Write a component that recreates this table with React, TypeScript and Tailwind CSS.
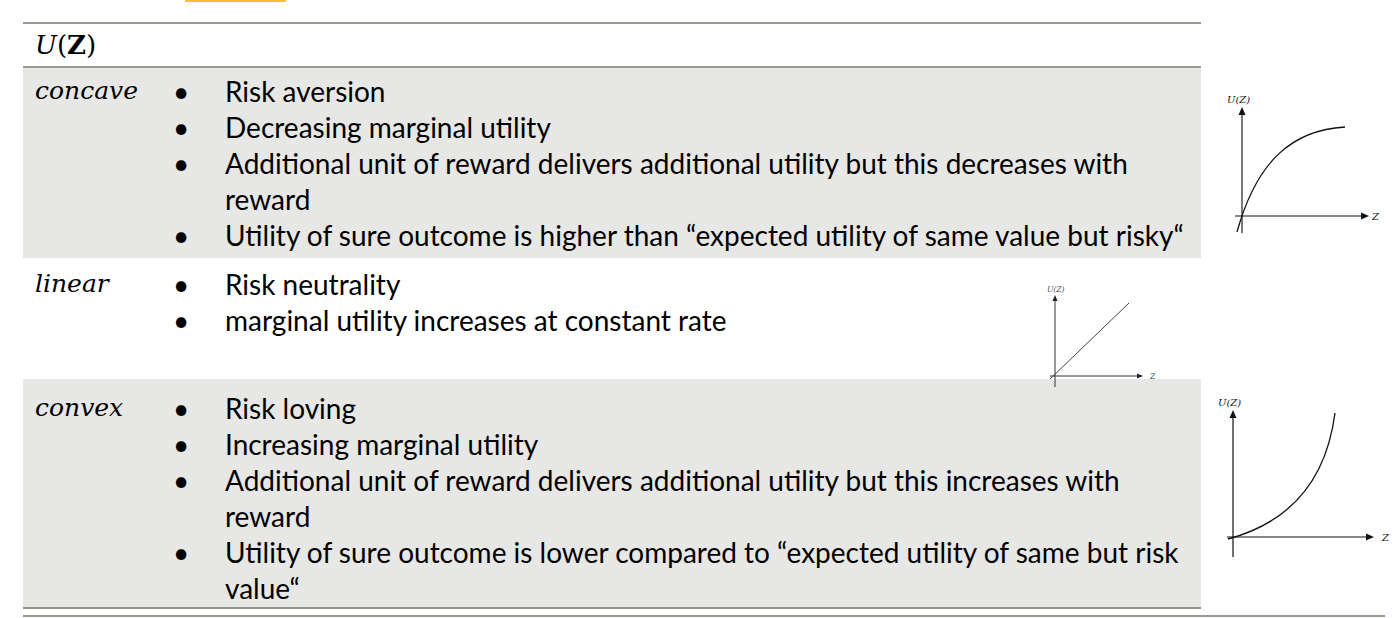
import React from 'react';

const rule = 'bg-[#979a8c]';

const ConcaveGraph = () => (
  <svg width="180" height="150" viewBox="0 0 180 150" className="block">
    <text x="12" y="15" fontSize="10" fontStyle="italic" fontFamily="'DejaVu Serif', serif" fill="#111">
      U(Z)
    </text>
    <line x1="27" y1="24" x2="27" y2="145" stroke="#7a7a7a" strokeWidth="2" />
    <polygon points="27,19 23.5,27 30.5,27" fill="#111" />
    <line x1="20" y1="128" x2="147" y2="128" stroke="#111" strokeWidth="1" />
    <polygon points="154,128 146,124.5 146,131.5" fill="#111" />
    <text x="157" y="132" fontSize="10" fontStyle="italic" fontFamily="'DejaVu Serif', serif" fill="#111">
      Z
    </text>
    <path d="M22,144 C42,72 78,42 130,39" fill="none" stroke="#111" strokeWidth="1.3" />
  </svg>
);

const LinearGraph = () => (
  <svg width="120" height="110" viewBox="0 0 120 110" className="block">
    <text x="7" y="12" fontSize="7.5" fontStyle="italic" fontFamily="'DejaVu Serif', serif" fill="#444">
      U(Z)
    </text>
    <line x1="15" y1="20" x2="15" y2="107" stroke="#333" strokeWidth="1" />
    <polygon points="15,15 12.5,21 17.5,21" fill="#222" />
    <line x1="10" y1="96" x2="98" y2="96" stroke="#333" strokeWidth="1" />
    <polygon points="103,96 97,93.5 97,98.5" fill="#222" />
    <text x="110" y="99" fontSize="7.5" fontStyle="italic" fontFamily="'DejaVu Serif', serif" fill="#444">
      Z
    </text>
    <line x1="10" y1="99" x2="89" y2="23" stroke="#444" strokeWidth="1" />
  </svg>
);

const ConvexGraph = () => (
  <svg width="186" height="175" viewBox="0 0 186 175" className="block">
    <text x="8" y="16" fontSize="10" fontStyle="italic" fontFamily="'DejaVu Serif', serif" fill="#111">
      U(Z)
    </text>
    <line x1="23" y1="25" x2="23" y2="167" stroke="#111" strokeWidth="1.2" />
    <polygon points="23,20 19.5,28 26.5,28" fill="#111" />
    <line x1="17" y1="147" x2="156" y2="147" stroke="#111" strokeWidth="1" />
    <polygon points="164,147 156,143.5 156,150.5" fill="#111" />
    <text x="172" y="151" fontSize="10" fontStyle="italic" fontFamily="'DejaVu Serif', serif" fill="#111">
      Z
    </text>
    <path d="M18,149 C70,135 115,100 125,23" fill="none" stroke="#111" strokeWidth="1.3" />
  </svg>
);

const Label = ({ children }: { children: React.ReactNode }) => (
  <div className="w-[147px] shrink-0 pl-[12px] font-['DejaVu_Serif',serif] italic text-[25px] leading-[36px] text-black">
    {children}
  </div>
);

const Bullets = ({ items }: { items: React.ReactNode[] }) => (
  <ul className="flex flex-col font-['Lato',sans-serif] text-[28px] leading-[36px] text-black">
    {items.map((it, i) => (
      <li key={i} className="flex">
        <span className="w-[55px] shrink-0 pl-[3px]">•</span>
        <span>{it}</span>
      </li>
    ))}
  </ul>
);

export default function App() {
  return (
    <div className="w-[1396px] h-[618px] bg-white overflow-hidden">
      <div className="ml-[185px] w-[101px] h-[2px] bg-[#f2c12e]" />

      <div className="pl-[23px] mt-[20px]">
        <div className={`w-[1178px] h-[2px] ${rule}`} />
        <div className="w-[1178px] h-[42px] flex items-center pl-[12px] font-['DejaVu_Serif',serif] text-[26px] text-black">
          <span className="italic">U</span>
          <span>(</span>
          <span className="font-bold">Z</span>
          <span>)</span>
        </div>
        <div className={`w-[1178px] h-[2px] ${rule}`} />

        {/* concave */}
        <div className="flex">
          <div className="w-[1178px] h-[190px] bg-[#e7e7e5] flex pt-[5px]">
            <Label>concave</Label>
            <Bullets
              items={[
                'Risk aversion',
                'Decreasing marginal utility',
                <>
                  Additional unit of reward delivers additional utility but this decreases with
                  <br />
                  reward
                </>,
                'Utility of sure outcome is higher than “expected utility of same value but risky“',
              ]}
            />
          </div>
          <div className="pl-[14px] pt-[20px]">
            <ConcaveGraph />
          </div>
        </div>

        {/* linear */}
        <div className="relative w-[1178px] h-[121px] flex pt-[8px]">
          <Label>linear</Label>
          <Bullets items={['Risk neutrality', 'marginal utility increases at constant rate']} />
          <div className="absolute left-[1017px] top-[22px] z-10">
            <LinearGraph />
          </div>
        </div>

        {/* convex */}
        <div className="flex">
          <div className="w-[1178px] h-[230px] bg-[#e7e7e5] border-b-2 border-[#8f9185] flex pt-[11px]">
            <Label>convex</Label>
            <Bullets
              items={[
                'Risk loving',
                'Increasing marginal utility',
                <>
                  Additional unit of reward delivers additional utility but this increases with
                  <br />
                  reward
                </>,
                <>
                  Utility of sure outcome is lower compared to “expected utility of same but risk
                  <br />
                  value“
                </>,
              ]}
            />
          </div>
          <div className="pl-[9px] pt-[11px]">
            <ConvexGraph />
          </div>
        </div>

        <div className={`mt-[6px] w-[1362px] h-[2px] ${rule}`} />
      </div>
    </div>
  );
}
